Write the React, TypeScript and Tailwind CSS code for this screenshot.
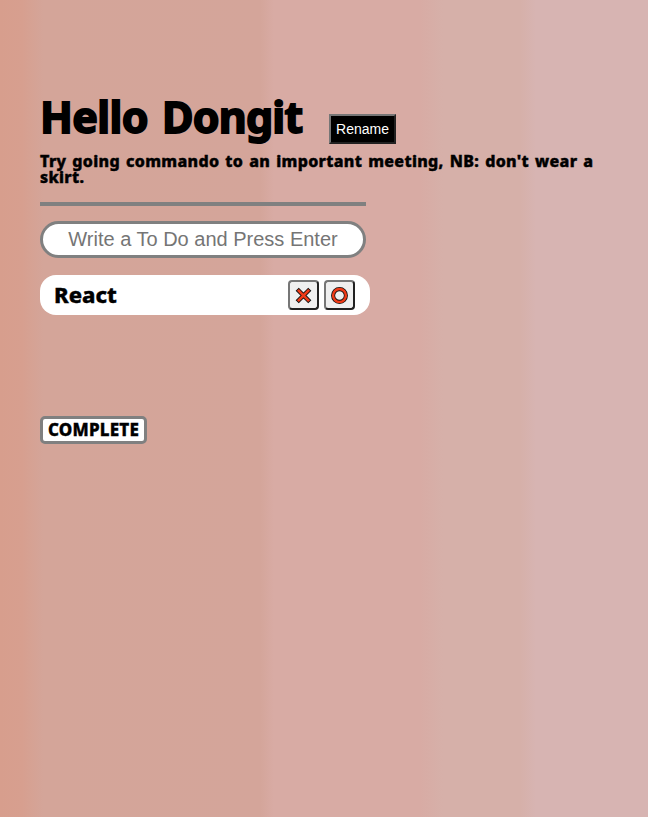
export default function App() {
  return (
    <main className="min-h-screen bg-[linear-gradient(to_right,#d79e8d_0,#d79f8f_22px,#d4a599_43px,#d4a59a_260px,#d8aba4_274px,#d8aba4_420px,#d6b0a9_443px,#d6b0a9_520px,#d7b4b2_536px,#d7b4b2_648px)] px-10 pt-[94px] font-['Noto_Sans',sans-serif] text-black">
      <header className="flex h-[50px] items-end">
        <h1 className="flex h-[50px] w-[289px] gap-[14px] whitespace-nowrap text-[43px] font-bold leading-[46px] [-webkit-text-stroke:1.8px_black] [stroke-linejoin:round]">
          <span className="tracking-[-0.6px]">Hello</span>
          <span className="tracking-[-0.8px]">Dongit</span>
        </h1>
        <button className="h-[30px] w-[67px] border-2 border-t-[#767676] border-l-[#767676] border-r-[#212121] border-b-[#212121] bg-black font-['Liberation_Sans',sans-serif] text-[14px] leading-none text-white">
          Rename
        </button>
      </header>
      <p className="mt-[9px] mb-[17px] h-8 whitespace-nowrap text-[16px] font-extrabold leading-4 tracking-[0.34px] [word-spacing:1.5px] [-webkit-text-stroke:0.45px_black]">
        Try going commando to an important meeting, NB: don't wear a
        <br />
        skirt.
      </p>
      <hr className="h-1 w-[326px] border-0 bg-[#808080]" />
      <input
        className="mt-[15px] block h-[37px] w-[326px] rounded-full border-[3px] border-[#808080] bg-white text-center font-['Liberation_Sans',sans-serif] text-[20px] placeholder:text-[#757575]"
        placeholder="Write a To Do and Press Enter"
      />
      <section className="mt-[17px] flex h-10 w-[330px] items-center rounded-[16px] bg-white pr-[15px] pl-[14px]">
        <span className="flex-1 pb-[2px] text-[22px] font-extrabold leading-none [-webkit-text-stroke:0.4px_black]">React</span>
        <div className="flex gap-[5px]">
          <button aria-label="Delete" className="flex h-[30px] w-[31px] items-center justify-center rounded-[4px] border-2 border-t-[#767676] border-l-[#767676] border-r-[#212121] border-b-[#212121] bg-[#efefef]">
            <svg width="17" height="17" viewBox="0 0 17 17">
              <path d="M2.2 2.2 14.8 14.8M14.8 2.2 2.2 14.8" stroke="#111" strokeWidth="4.4" />
              <path d="M2.9 2.9 14.1 14.1M14.1 2.9 2.9 14.1" stroke="#f03a17" strokeWidth="2.7" />
            </svg>
          </button>
          <button aria-label="Complete" className="flex h-[30px] w-[31px] items-center justify-center rounded-[4px] border-2 border-t-[#767676] border-l-[#767676] border-r-[#212121] border-b-[#212121] bg-[#efefef]">
            <svg width="17" height="17" viewBox="0 0 17 17" fill="none">
              <circle cx="8.5" cy="8.5" r="6.4" stroke="#111" strokeWidth="4.1" />
              <circle cx="8.5" cy="8.5" r="6.4" stroke="#f03a17" strokeWidth="2.5" />
            </svg>
          </button>
        </div>
      </section>
      <button className="mt-[101px] flex h-7 w-[107px] items-center justify-center rounded-[5px] border-[3px] border-[#808080] bg-white pb-[1px] text-[17px] font-extrabold leading-none tracking-[0.2px] [-webkit-text-stroke:0.35px_black]">
        COMPLETE
      </button>
    </main>
  );
}
